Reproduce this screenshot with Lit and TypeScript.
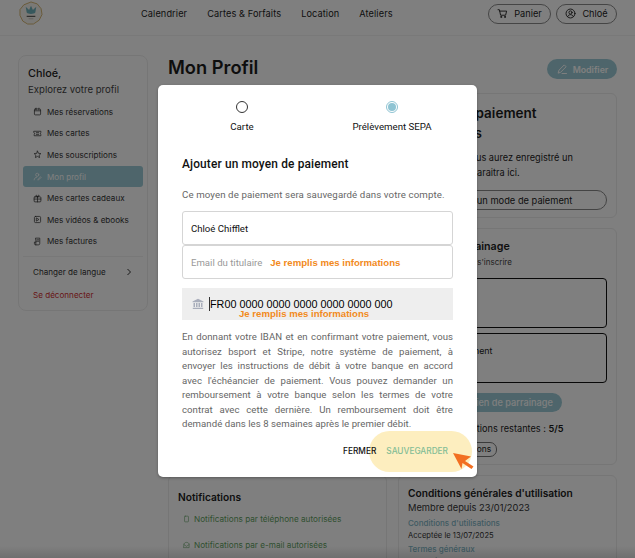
import { LitElement, html, css, svg } from "lit";
import { customElement } from "lit/decorators.js";

const ic = (body: unknown) => html`<svg class="ic" viewBox="0 0 16 16" fill="none" stroke="currentColor" stroke-width="1.3" stroke-linecap="round" stroke-linejoin="round">${body}</svg>`;

const menu: [string, unknown, boolean?][] = [
  ["Mes réservations", svg`<rect x="2.5" y="3.5" width="11" height="10.5" rx="1.5"/><path d="M2.5 6.8h11M5.5 2v3M10.5 2v3"/>`],
  ["Mes cartes", svg`<path d="M2 4h12v2.600a1.500 1.500 0 0 0 0 2.800V12H2V9.400a1.500 1.500 0 0 0 0-2.800z"/><path d="M6 6.500h4M6 9.500h4"/>`],
  ["Mes souscriptions", svg`<path d="M8 2l1.800 3.900 4.200.5-3.100 2.900.8 4.200L8 11.400l-3.700 2.100.8-4.200L2 6.400l4.200-.5z"/>`],
  ["Mon profil", svg`<circle cx="7.500" cy="5" r="2.800"/><path d="M2 14c.3-3 2.200-4.500 4.500-4.700M9 13l4.500-4.500 1 1L10 14H9z"/>`, true],
  ["Mes cartes cadeaux", svg`<rect x="2" y="5" width="12" height="9" rx="1.500"/><path d="M2 9h12M8 5v9M8 5C6 5 4.500 4 5 2.800 5.600 1.600 7.500 2.600 8 5c.5-2.400 2.400-3.400 3-2.200C11.500 4 10 5 8 5z"/>`],
  ["Mes vidéos & ebooks", svg`<rect x="2.500" y="2.500" width="11" height="11" rx="2"/><path d="M6.500 5.500l4 2.500-4 2.500z"/>`],
  ["Mes factures", svg`<path d="M5 2h7v9.500a2.500 2.500 0 0 1-2.500 2.500H5a2.500 2.500 0 0 1-2.500-2.500V9H5zM7 5h3M7 7.500h3M5 14V9"/>`],
];

@customElement("app-root")
export class AppRoot extends LitElement {
  static styles = css`
    :host { display: block; width: 635px; height: 558px; position: relative; overflow: hidden; background: #fff; font-family: "Inter", "Liberation Sans", sans-serif; color: #1c1c1c; }
    .ic { width: 12px; height: 12px; flex: none; }
    header { height: 35px; border-bottom: 1px solid #f2f2f2; display: flex; align-items: center; padding: 0 18px; }
    .logo { width: 24px; height: 24px; flex: none; margin: -9px 0 0 1px; }
    nav { display: flex; gap: 20px; margin-left: 98px; font-size: 9.2px; flex: 1; letter-spacing: .1px; margin-top: -8px; }
    .hbtns { display: flex; gap: 5px; margin-top: -8px; }
    .hbtn { height: 18px; border: 1px solid #8a8a8a; border-radius: 10px; display: flex; align-items: center; justify-content: center; gap: 6px; font-size: 9.2px; box-sizing: content-box; }
    .hbtn.a { width: 61px; } .hbtn.b { width: 59px; }
    .hbtn .ic { width: 11px; height: 11px; }
    main { display: flex; align-items: flex-start; padding: 19px 18px 0; gap: 20px; }
    .side { width: 120px; height: 244px; flex: none; border: 1px solid #ededed; border-radius: 8px; padding: 10px 4px 0; box-sizing: content-box; font-size: 8.1px; }
    .hello { font-size: 10.8px; font-weight: 500; margin: 0 0 0 5px; line-height: 16px; }
    .sub { font-size: 9.6px; color: #444; margin: 0 0 0 5px; line-height: 16px; }
    .side ul { list-style: none; margin: 3px 0 0; padding: 0; display: flex; flex-direction: column; }
    .side li { height: 21.6px; display: flex; align-items: center; gap: 5px; padding-left: 10px; border-radius: 3px; color: #333; }
    .side li .ic { width: 9px; height: 9px; }
    .side li.on { background: #9ccbd6; color: #fff; }
    .lang { border-top: 1px solid #f1f1f1; margin-top: 4px; padding: 7px 10px 0; display: flex; justify-content: space-between; align-items: center; height: 15px; color: #333; }
    .lang svg { width: 8px; height: 8px; }
    .out { color: #d03030; padding-left: 10px; margin-top: 10px; line-height: 12px; }
    .content { flex: 1; display: flex; flex-direction: column; }
    .title { display: flex; align-items: center; justify-content: space-between; height: 24px; }
    h1 { margin: 0; font-size: 18.3px; font-weight: 600; }
    .mod { width: 70px; height: 20px; border-radius: 10px; background: #9ccbd6; color: #fff; font-size: 8.8px; font-weight: 600; display: flex; align-items: center; justify-content: center; gap: 5px; margin-top: 4px; }
    .cols { display: flex; gap: 11px; margin-top: 14px; align-items: flex-start; }
    .left { width: 219px; display: flex; flex-direction: column; padding-top: 382px; }
    .right { width: 219px; display: flex; flex-direction: column; gap: 10px; }
    .card { border: 1px solid #ececec; border-radius: 6px; box-sizing: border-box; padding: 0 9px; }
    .c1 { height: 125px; padding-top: 9px; }
    .c1 h2 { font-size: 13.5px; font-weight: 600; margin: 0; line-height: 20px; width: 150px; }
    .c1 p { font-size: 9.2px; margin: 8px 0 0; line-height: 14.5px; width: 172px; }
    .c1 .btn { margin-top: 10px; height: 18px; border: 1px solid #888; border-radius: 10px; font-size: 9.3px; display: flex; align-items: center; justify-content: center; }
    .c2 { height: 237px; padding-top: 9px; }
    .c2 h2 { font-size: 10.7px; font-weight: 600; margin: 0; line-height: 18px; }
    .c2 .s { font-size: 8px; color: #444; line-height: 12px; }
    .box { border: 1px solid #111; border-radius: 4px; height: 50px; box-sizing: border-box; }
    .box.first { margin-top: 10px; }
    .box + .box { margin-top: 5px; font-size: 8.8px; padding: 11px 0 0 10px; }
    .parr { margin-top: 10px; height: 19px; background: #9ccbd6; color: #fff; border-radius: 10px; width: 154px; font-size: 9.2px; font-weight: 500; display: flex; align-items: center; justify-content: center; box-sizing: border-box; }
    .rest { margin: 10px 0 0; font-size: 9.2px; line-height: 14px; }
    .rest b { font-weight: 600; }
    .pill { display: inline-block; margin: 5px 0 0; border: 1px solid #777; border-radius: 7px; font-size: 8.4px; padding: 1px 5px; line-height: 11px; }
    .c3 { height: 120px; padding-top: 10px; }
    .c3 h3 { font-size: 10.2px; font-weight: 600; margin: 0; line-height: 15px; }
    .n h3 { font-size: 10.2px; font-weight: 600; margin: 0; line-height: 16px; }
    .c3 .m { font-size: 9.3px; color: #333; margin: 0 0 1px; line-height: 14px; }
    .c3 .l { font-size: 8px; color: #7fb5c5; margin: 2px 0 0; line-height: 12px; font-weight: 500; }
    .c3 .d { font-size: 7.6px; color: #333; margin: 1px 0 0; line-height: 11px; }
    .n { height: 120px; padding-top: 13px; }
    .n .row { display: flex; align-items: center; gap: 4px; font-size: 8.2px; color: #5f9f62; line-height: 12px; margin-left: 5px; }
    .n .row:first-of-type { margin-top: 8px; }
    .n .row + .row { margin-top: 14px; }
    .n .row .ic { width: 7px; height: 8px; }

    .scrim { position: absolute; inset: 0; background: linear-gradient(to top, rgba(0, 0, 0, .12), transparent 12px), rgba(0, 0, 0, .5); }
    .modal { position: absolute; left: 158px; top: 85px; width: 319px; height: 392px; background: #fff; border-radius: 5px; box-shadow: 0 1px 3px rgba(0,0,0,.3); padding: 16px 24px 0; box-sizing: border-box; font-family: Roboto, "Liberation Sans", sans-serif; color: #111; }
    .tabs { display: flex; justify-content: space-between; margin: 0 -24px; }
    .tab { width: 150px; display: flex; flex-direction: column; align-items: center; font-size: 9.7px; gap: 7px; line-height: 13px; }
    .tab:first-child { margin-left: 9px; } .tab:last-child { margin-right: 10px; }
    .radio { width: 12px; height: 12px; border: 1px solid #333; border-radius: 50%; box-sizing: border-box; display: flex; align-items: center; justify-content: center; }
    .radio.on { border-color: #8fc4d3; }
    .radio.on::after { content: ""; width: 8px; height: 8px; border-radius: 50%; background: #8fc4d3; }
    h4 { margin: 23px 0 0; font-size: 11.9px; font-weight: 500; line-height: 16px; letter-spacing: .15px; }
    .desc { margin: 16px 0 0; font-size: 9.7px; color: #666; line-height: 14px; letter-spacing: .1px; }
    .inp { border: 1px solid #d5d5d5; border-radius: 3px; height: 34px; box-sizing: border-box; display: flex; align-items: center; padding: 0 8px; font-size: 9.6px; width: 271px; }
    .inp.one { margin-top: 9px; }
    .inp.two { color: #999; gap: 8px; }
    .hint { color: #f28a1c; font-family: "Liberation Sans", sans-serif; font-weight: 700; font-size: 9.6px; }
    .iban { margin-top: 9px; width: 271px; height: 32px; background: #eee; display: flex; align-items: flex-start; box-sizing: border-box; padding: 9px 0 0 10px; position: relative; }
    .iban svg { width: 12px; height: 12px; color: #a9aebb; flex: none; margin-top: 1px; }
    .iban .val { font-family: "Liberation Sans", sans-serif; font-size: 10.8px; margin-left: 5px; border-left: 1px solid #333; line-height: 14px; color: #000; }
    .iban .hint { position: absolute; left: 57px; top: 20px; line-height: 12px; }
    .legal { margin: 10px 0 0; width: 271px; font-size: 9.6px; line-height: 14.5px; color: #666; text-align: justify; letter-spacing: .05px; }
    .acts { position: absolute; top: 359px; right: 29px; display: flex; gap: 10px; font-family: "Inter", "Liberation Sans", sans-serif; font-size: 8.3px; font-weight: 500; line-height: 14px; }
    .acts .save { color: #84bd96; }
    .spot { position: absolute; left: 211px; top: 346px; width: 103px; height: 41px; border-radius: 21px; background: #fdeebf; }
    .arrow { position: absolute; left: 294px; top: 367px; width: 24px; height: 20px; }
  `;

  render() {
    return html`
      <header>
        <svg class="logo" viewBox="0 0 25 25" fill="none">
          <polygon points="12.500,1 19,3 23,8 24,14 21,20 15,24 9,24 4,21 1,15 1,9 5,4" stroke="#c9a24f" stroke-width=".8" fill="#f5f3ec"/>
          <path d="M7 6l3.500 3.500L12.500 5l2 4.500L18 6l-1 6c-1.500 2-7.500 2-9 0z" fill="#6fb0ba"/>
          <path d="M8 16h9" stroke="#555" stroke-width="1.200"/>
          <path d="M10 18.500h5" stroke="#aaa" stroke-width=".6"/>
        </svg>
        <nav><span>Calendrier</span><span>Cartes &amp; Forfaits</span><span>Location</span><span>Ateliers</span></nav>
        <div class="hbtns">
          <div class="hbtn a">${ic(svg`<path d="M1.500 2.500h2l1.700 8h7.300l1.500-6H4"/><circle cx="6" cy="13" r=".8"/><circle cx="11.500" cy="13" r=".8"/>`)}Panier</div>
          <div class="hbtn b">${ic(svg`<circle cx="8" cy="8" r="6.500"/><circle cx="8" cy="6.500" r="2.300"/><path d="M3.800 12.500c1-2 2.500-2.800 4.200-2.800s3.200.8 4.200 2.800"/>`)}Chloé</div>
        </div>
      </header>
      <main>
        <aside class="side">
          <p class="hello">Chloé,</p>
          <p class="sub">Explorez votre profil</p>
          <ul>
            ${menu.map(([t, i, on]) => html`<li class=${on ? "on" : ""}>${ic(i)}${t}</li>`)}
          </ul>
          <div class="lang"><span>Changer de langue</span><svg viewBox="0 0 8 8" fill="none" stroke="currentColor" stroke-width="1"><path d="M2.500 1l3 3-3 3"/></svg></div>
          <div class="out">Se déconnecter</div>
        </aside>
        <div class="content">
          <div class="title">
            <h1>Mon Profil</h1>
            <div class="mod">${ic(svg`<path d="M3 13l1-3.500 7-7 2.500 2.500-7 7zM8 14h6"/>`)}Modifier</div>
          </div>
          <div class="cols">
            <div class="left">
              <div class="card n">
                <h3>Notifications</h3>
                <div class="row">${ic(svg`<rect x="3.500" y="1.500" width="9" height="13" rx="1.500"/>`)}Notifications par téléphone autorisées</div>
                <div class="row">${ic(svg`<path d="M2 7c0-3 2.500-5 6-5s6 2 6 5v7H2zM2 7l6 4 6-4"/>`)}Notifications par e-mail autorisées</div>
              </div>
            </div>
            <div class="right">
              <div class="card c1">
                <h2>Moyen de paiement enregistrés</h2>
                <p>Une fois que vous aurez enregistré un paiement, il apparaitra ici.</p>
                <div class="btn">Ajouter un mode de paiement</div>
              </div>
              <div class="card c2">
                <h2>Code de parrainage</h2>
                <div class="s">Invitez vos amis à s'inscrire</div>
                <div class="box first"></div>
                <div class="box">Chaque paiement</div>
                <div class="parr">Obtenir mon lien de parrainage</div>
                <p class="rest">Nombre d'invitations restantes : <b>5/5</b></p>
                <span class="pill">Voir mes invitations</span>
              </div>
              <div class="card c3">
                <h3>Conditions générales d'utilisation</h3>
                <p class="m">Membre depuis 23/01/2023</p>
                <p class="l">Conditions d'utilisations</p>
                <p class="d">Acceptée le 13/07/2025</p>
                <p class="l">Termes généraux</p>
                <p class="d">Acceptée le 13/07/2025</p>
              </div>
            </div>
          </div>
        </div>
      </main>
      <div class="scrim"></div>
      <div class="modal">
        <div class="tabs">
          <div class="tab"><span class="radio"></span>Carte</div>
          <div class="tab"><span class="radio on"></span>Prélèvement SEPA</div>
        </div>
        <h4>Ajouter un moyen de paiement</h4>
        <p class="desc">Ce moyen de paiement sera sauvegardé dans votre compte.</p>
        <div class="inp one">Chloé Chifflet</div>
        <div class="inp two">Email du titulaire <span class="hint">Je remplis mes informations</span></div>
        <div class="iban">
          <svg viewBox="0 0 12 12" fill="currentColor"><path d="M6 .8L11.500 3.500v.8H.5v-.8zM1.500 5h1.500v4H1.500zM4 5h1.500v4H4zM6.500 5H8v4H6.500zM9 5h1.500v4H9zM.8 9.700h10.400v1.300H.8z"/></svg>
          <span class="val">FR00 0000 0000 0000 0000 0000 000</span>
          <span class="hint">Je remplis mes informations</span>
        </div>
        <p class="legal">En donnant votre IBAN et en confirmant votre paiement, vous autorisez bsport et Stripe, notre système de paiement, à envoyer les instructions de débit à votre banque en accord avec l'échéancier de paiement. Vous pouvez demander un remboursement à votre banque selon les termes de votre contrat avec cette dernière. Un remboursement doit être demandé dans les 8 semaines après le premier débit.</p>
        <div class="spot"></div>
        <div class="acts"><span>FERMER</span><span class="save">SAUVEGARDER</span></div>
        <svg class="arrow" viewBox="0 0 24 20"><path d="M1 1l18 3.500-6 4.500 8.500 5.500-2 2.500-9-6-1 6z" fill="#f26f21"/></svg>
      </div>
    `;
  }
}
